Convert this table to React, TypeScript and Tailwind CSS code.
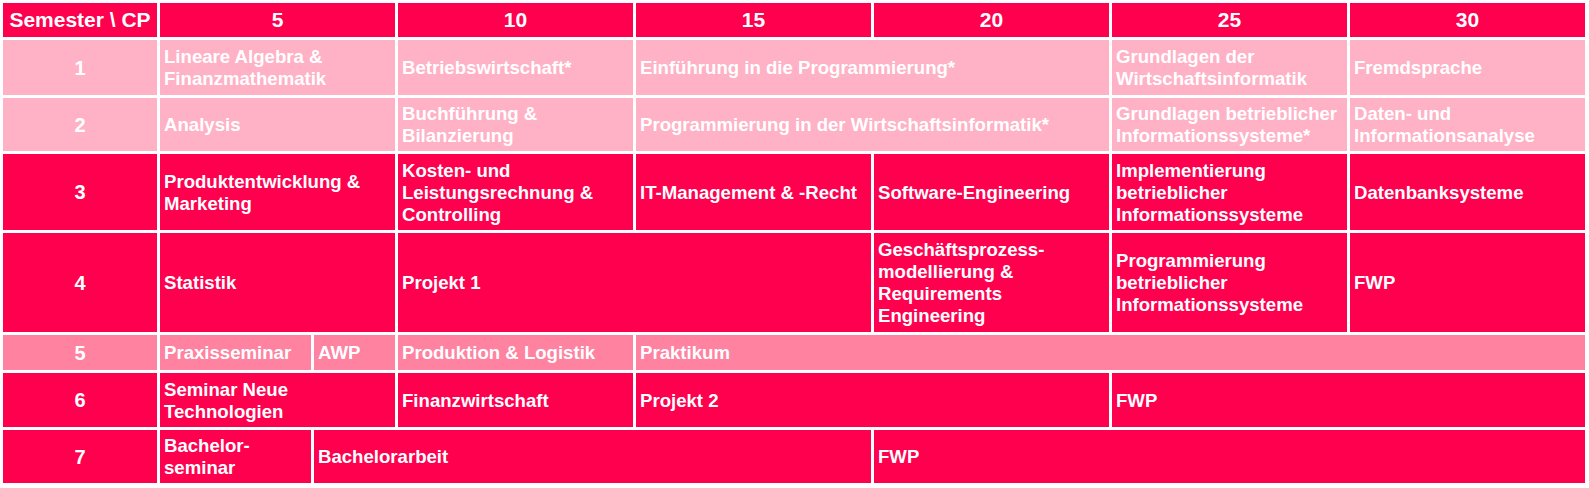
const dark = 'bg-[#ff004f]';
const light = 'bg-[#ffb1c6]';
const mid = 'bg-[#ff82a0]';

type Cell = { text: React.ReactNode; span?: string };

const Row = ({ label, bg, cells }: { label: string; bg: string; cells: Cell[] }) => (
  <>
    <div className={`${bg} flex items-center justify-center text-[20px]`}>{label}</div>
    {cells.map((c, i) => (
      <div key={i} className={`${bg} ${c.span ?? ''} flex items-center pl-[4px] pr-[3px] pt-[1px]`}>
        <span>{c.text}</span>
      </div>
    ))}
  </>
);

const App = () => {
  return (
    <div className="w-[1589px] h-[488px] bg-white p-[3px]">
      <div
        className="grid grid-cols-[154px_151px_81px_235px_235px_235px_235px_235px] grid-rows-[34px_55px_53px_76px_99px_35px_54px_53px] gap-[3px] text-white font-bold text-[18.6px] leading-[22px]"
        style={{ fontFamily: '"Liberation Sans", Arial, sans-serif' }}
      >
        {/* Header */}
        <div className={`${dark} flex items-center justify-center text-[21px]`}>Semester \ CP</div>
        <div className={`${dark} col-span-2 flex items-center justify-center text-[21px]`}>5</div>
        <div className={`${dark} flex items-center justify-center text-[21px]`}>10</div>
        <div className={`${dark} flex items-center justify-center text-[21px]`}>15</div>
        <div className={`${dark} flex items-center justify-center text-[21px]`}>20</div>
        <div className={`${dark} flex items-center justify-center text-[21px]`}>25</div>
        <div className={`${dark} flex items-center justify-center text-[21px]`}>30</div>

        <Row
          label="1"
          bg={light}
          cells={[
            { text: <>Lineare Algebra &amp;<br />Finanzmathematik</>, span: 'col-span-2' },
            { text: 'Betriebswirtschaft*' },
            { text: 'Einführung in die Programmierung*', span: 'col-span-2' },
            { text: <>Grundlagen der<br />Wirtschaftsinformatik</> },
            { text: 'Fremdsprache' },
          ]}
        />

        <Row
          label="2"
          bg={light}
          cells={[
            { text: 'Analysis', span: 'col-span-2' },
            { text: <>Buchführung &amp;<br />Bilanzierung</> },
            { text: 'Programmierung in der Wirtschaftsinformatik*', span: 'col-span-2' },
            { text: <>Grundlagen betrieblicher<br />Informationssysteme*</> },
            { text: <>Daten- und<br />Informationsanalyse</> },
          ]}
        />

        <Row
          label="3"
          bg={dark}
          cells={[
            { text: <>Produktentwicklung &amp;<br />Marketing</>, span: 'col-span-2' },
            { text: <>Kosten- und<br />Leistungsrechnung &amp;<br />Controlling</> },
            { text: 'IT-Management & -Recht' },
            { text: 'Software-Engineering' },
            { text: <>Implementierung<br />betrieblicher<br />Informationssysteme</> },
            { text: 'Datenbanksysteme' },
          ]}
        />

        <Row
          label="4"
          bg={dark}
          cells={[
            { text: 'Statistik', span: 'col-span-2' },
            { text: 'Projekt 1', span: 'col-span-2' },
            { text: <>Geschäftsprozess-<br />modellierung &amp;<br />Requirements<br />Engineering</> },
            { text: <>Programmierung<br />betrieblicher<br />Informationssysteme</> },
            { text: 'FWP' },
          ]}
        />

        <Row
          label="5"
          bg={mid}
          cells={[
            { text: 'Praxisseminar' },
            { text: 'AWP' },
            { text: 'Produktion & Logistik' },
            { text: 'Praktikum', span: 'col-span-4' },
          ]}
        />

        <Row
          label="6"
          bg={dark}
          cells={[
            { text: <>Seminar Neue<br />Technologien</>, span: 'col-span-2' },
            { text: 'Finanzwirtschaft' },
            { text: 'Projekt 2', span: 'col-span-2' },
            { text: 'FWP', span: 'col-span-2' },
          ]}
        />

        <Row
          label="7"
          bg={dark}
          cells={[
            { text: <>Bachelor-<br />seminar</> },
            { text: 'Bachelorarbeit', span: 'col-span-3' },
            { text: 'FWP', span: 'col-span-3' },
          ]}
        />
      </div>
    </div>
  );
};

export default App;
